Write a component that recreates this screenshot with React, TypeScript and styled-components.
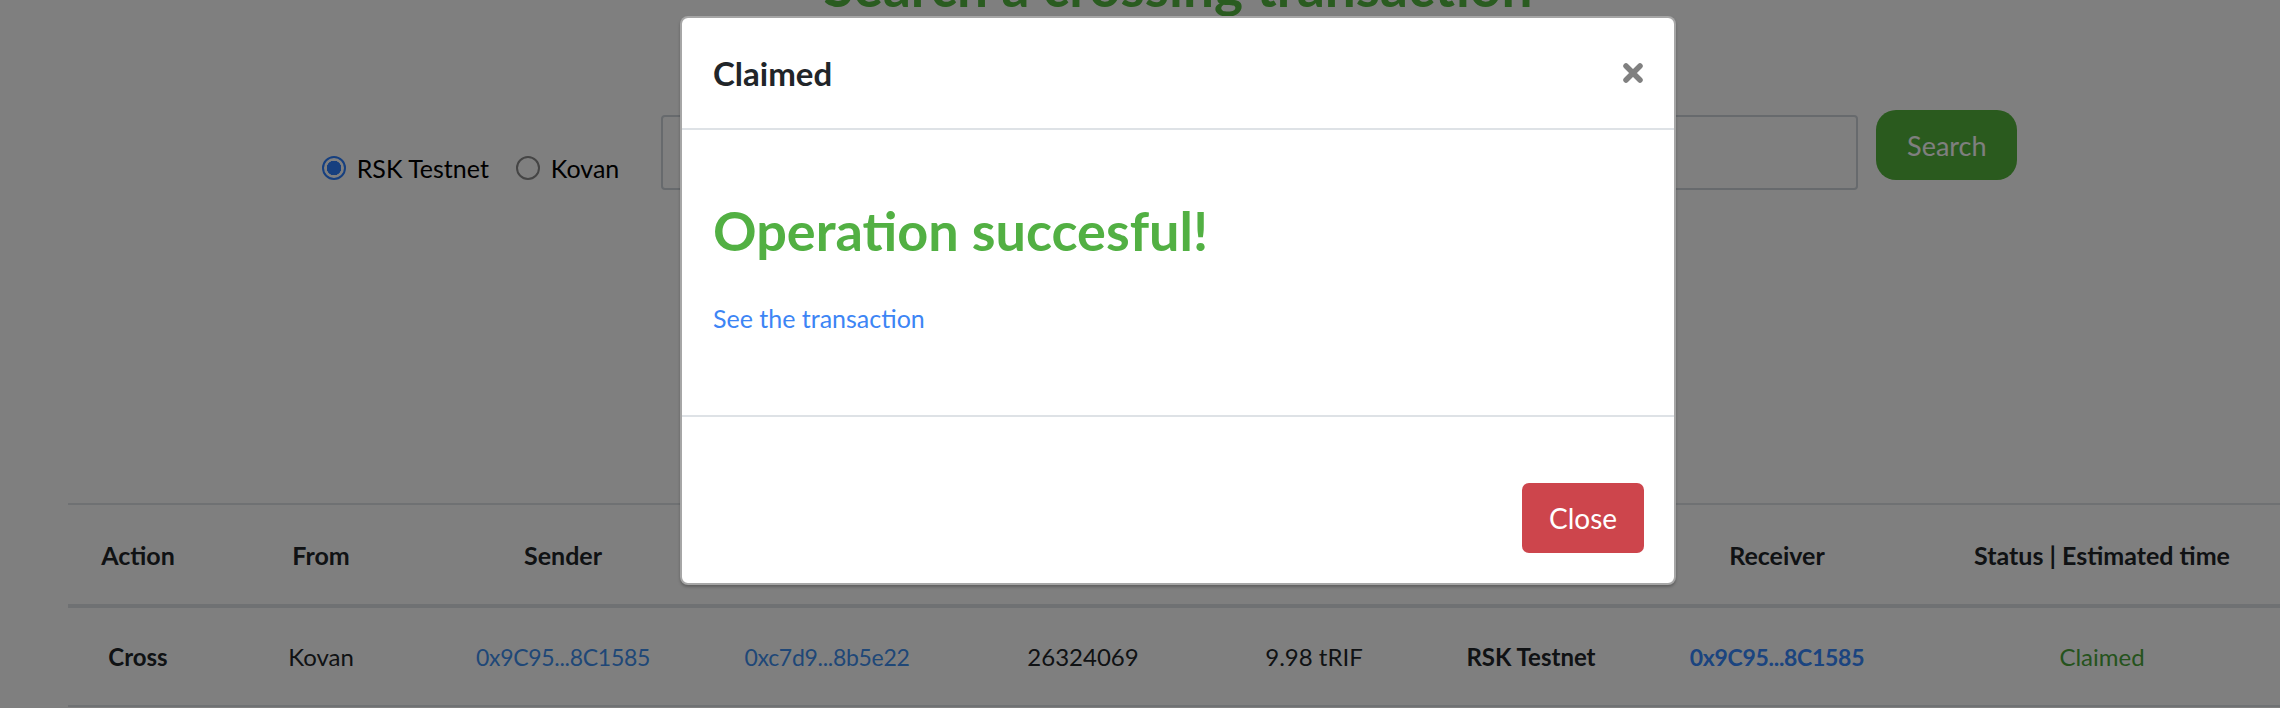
import styled, { createGlobalStyle } from "styled-components";

const GlobalStyle = createGlobalStyle`
  html, body {
    margin: 0;
    padding: 0;
    overflow: hidden;
    background: #ffffff;
  }
  body {
    font-family: Lato, "Liberation Sans", sans-serif;
    color: #212529;
  }
  * {
    box-sizing: border-box;
  }
`;

const columns = [
  { label: "Action", width: 140 },
  { label: "From", width: 226 },
  { label: "Sender", width: 258 },
  { label: "Token", width: 270 },
  { label: "Block", width: 242 },
  { label: "Amount", width: 220 },
  { label: "To", width: 214 },
  { label: "Receiver", width: 278 },
  { label: "Status | Estimated time", width: 372 },
];

const CloseIcon = () => (
  <svg width="22" height="22" viewBox="0 0 22 22">
    <path
      d="M4 4 L18 18 M18 4 L4 18"
      stroke="#808080"
      strokeWidth="5.5"
      strokeLinecap="round"
    />
  </svg>
);

export default function App() {
  return (
    <>
      <GlobalStyle />
      <Page>
        <Title>Search a crossing transaction</Title>
        <SearchRow>
          <NetworkGroup>
            <RadioLabel>
              <Radio type="radio" name="net" defaultChecked />
              RSK Testnet
            </RadioLabel>
            <RadioLabel>
              <Radio type="radio" name="net" />
              Kovan
            </RadioLabel>
          </NetworkGroup>
          <TxInput type="text" />
          <SearchButton>Search</SearchButton>
        </SearchRow>

        <Table>
          <colgroup>
            {columns.map((c) => (
              <Col key={c.label} $w={c.width} />
            ))}
          </colgroup>
          <thead>
            <tr>
              {columns.map((c) => (
                <Th key={c.label}>{c.label}</Th>
              ))}
            </tr>
          </thead>
          <tbody>
            <tr>
              <Td $bold>Cross</Td>
              <Td>Kovan</Td>
              <Td>
                <Link href="#">0x9C95...8C1585</Link>
              </Td>
              <Td>
                <Link href="#">0xc7d9...8b5e22</Link>
              </Td>
              <Td>26324069</Td>
              <Td>9.98 tRIF</Td>
              <Td $bold>RSK Testnet</Td>
              <Td>
                <Link href="#" $bold>
                  0x9C95...8C1585
                </Link>
              </Td>
              <Td>
                <Status>Claimed</Status>
              </Td>
            </tr>
          </tbody>
        </Table>

        <Backdrop>
          <Modal>
            <ModalHeader>
              <ModalTitle>Claimed</ModalTitle>
              <CloseX aria-label="Close">
                <CloseIcon />
              </CloseX>
            </ModalHeader>
            <ModalBody>
              <SuccessText>Operation succesful!</SuccessText>
              <TxLink href="#">See the transaction</TxLink>
            </ModalBody>
            <ModalFooter>
              <DangerButton>Close</DangerButton>
            </ModalFooter>
          </Modal>
        </Backdrop>
      </Page>
    </>
  );
}

const Page = styled.div`
  position: relative;
  width: 2356px;
  height: 708px;
  padding: 0 68px;
  overflow: hidden;
`;

const Title = styled.h1`
  margin: -47px 0 0;
  text-align: center;
  font-size: 55px;
  line-height: 66px;
  font-weight: 700;
  color: #55b840;
`;

const SearchRow = styled.div`
  display: flex;
  justify-content: center;
  align-items: flex-start;
  margin-top: 91px;
  padding-right: 17px;
`;

const NetworkGroup = styled.div`
  display: flex;
  align-items: center;
  gap: 27px;
  margin-top: 40px;
  margin-right: 42px;
`;

const RadioLabel = styled.label`
  display: flex;
  align-items: center;
  gap: 11px;
  font-size: 25px;
  line-height: 36px;
  color: #000000;
`;

const Radio = styled.input`
  appearance: none;
  margin: 0;
  width: 24px;
  height: 24px;
  border-radius: 50%;
  border: 2px solid #8a8a8a;
  background: #ffffff;
  &:checked {
    border-color: #2c7fff;
    background: radial-gradient(circle, #2c7fff 0 7px, #ffffff 7.5px);
  }
`;

const TxInput = styled.input`
  width: 1197px;
  height: 75px;
  margin-top: 5px;
  border: 2px solid #ced4da;
  border-radius: 4px;
  background: #ffffff;
`;

const SearchButton = styled.button`
  width: 141px;
  height: 70px;
  margin-left: 18px;
  border: none;
  border-radius: 20px;
  background: #54b43c;
  color: #ffffff;
  font-family: inherit;
  font-size: 27px;
`;

const Table = styled.table`
  width: 2220px;
  margin-top: 313px;
  border-collapse: collapse;
  table-layout: fixed;
`;

const Col = styled.col<{ $w: number }>`
  width: ${(p) => p.$w}px;
`;

const Th = styled.th`
  height: 102px;
  border-top: 2px solid #dee2e6;
  border-bottom: 4px solid #dee2e6;
  font-size: 25px;
  font-weight: 700;
  text-align: center;
  vertical-align: middle;
  color: #212529;
`;

const Td = styled.td<{ $bold?: boolean }>`
  height: 100px;
  border-bottom: 2px solid #dee2e6;
  font-size: 24px;
  font-weight: ${(p) => (p.$bold ? 700 : 400)};
  text-align: center;
  vertical-align: middle;
  color: #212529;
`;

const Link = styled.a<{ $bold?: boolean }>`
  color: ${(p) => (p.$bold ? "#3688ff" : "#3f8fef")};
  font-weight: ${(p) => (p.$bold ? 700 : 400)};
  font-size: 23px;
  letter-spacing: -0.3px;
  text-decoration: none;
`;

const Status = styled.span`
  color: #4aa63a;
`;

const Backdrop = styled.div`
  position: absolute;
  inset: 0;
  background: rgba(0, 0, 0, 0.5);
  display: flex;
  justify-content: center;
  align-items: flex-start;
  padding-top: 16px;
`;

const Modal = styled.div`
  width: 996px;
  background: #ffffff;
  border: 2px solid rgba(0, 0, 0, 0.35);
  border-radius: 8px;
  box-shadow: 0 2px 3px rgba(0, 0, 0, 0.25);
  overflow: hidden;
`;

const ModalHeader = styled.div`
  display: flex;
  align-items: center;
  justify-content: space-between;
  padding: 32px 31px 32px 31px;
  border-bottom: 2px solid #dee2e6;
`;

const ModalTitle = styled.h5`
  margin: 0;
  font-size: 33px;
  line-height: 46px;
  font-weight: 700;
  color: #212529;
`;

const CloseX = styled.button`
  display: flex;
  padding: 0;
  margin-right: -1px;
  border: none;
  background: none;
`;

const ModalBody = styled.div`
  display: flex;
  flex-direction: column;
  align-items: flex-start;
  padding: 68px 31px 78px;
`;

const SuccessText = styled.h2`
  margin: 0;
  font-size: 54px;
  line-height: 65px;
  font-weight: 700;
  color: #52b043;
`;

const TxLink = styled.a`
  margin-top: 36px;
  font-size: 25px;
  line-height: 38px;
  color: #3d85f5;
  text-decoration: none;
`;

const ModalFooter = styled.div`
  display: flex;
  justify-content: flex-end;
  padding: 66px 30px 30px;
  border-top: 2px solid #dee2e6;
`;

const DangerButton = styled.button`
  width: 122px;
  height: 70px;
  border: none;
  border-radius: 7px;
  background: #cd454c;
  color: #ffffff;
  font-family: inherit;
  font-size: 28px;
`;
